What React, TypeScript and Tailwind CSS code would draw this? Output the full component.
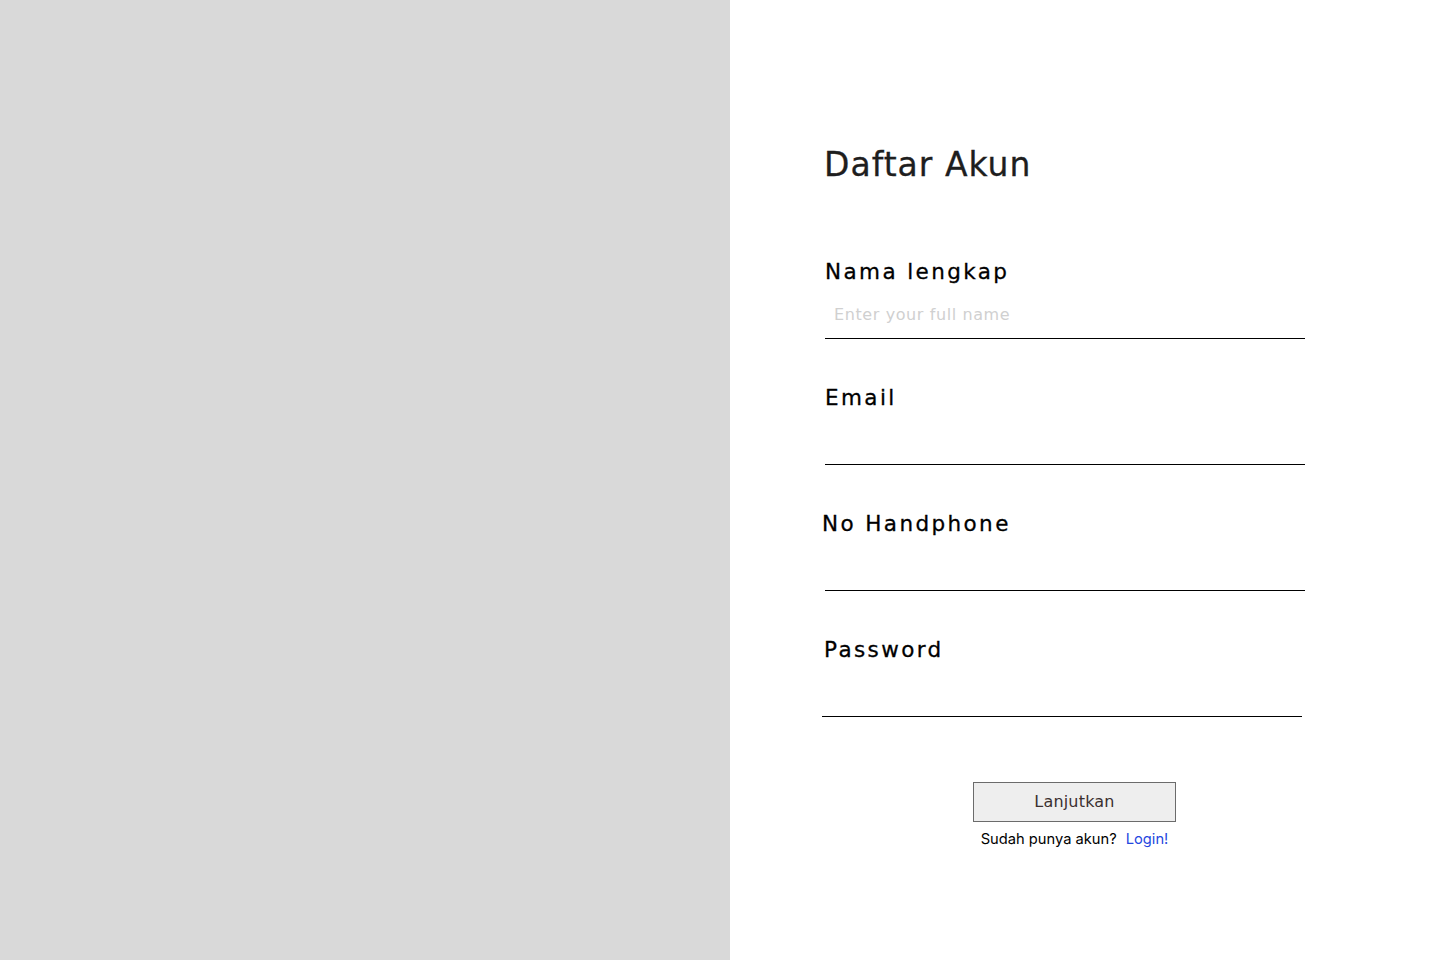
import React from "react";

const head = { fontFamily: '"DejaVu Sans", "Liberation Sans", sans-serif' };

function Field({ label, placeholder, shift = 0, labelShift = 0, type = "text" }: { label: string; placeholder?: string; shift?: number; labelShift?: number; type?: string }) {
  return (
    <div className="flex flex-col" style={shift ? { marginLeft: shift } : undefined}>
      <label
        className="block h-[30px] text-[21.5px] leading-[30px] tracking-[2.4px] text-black [-webkit-text-stroke:0.3px_black]"
        style={{ ...head, marginLeft: labelShift }}
      >
        {label}
      </label>
      <input
        type={type}
        placeholder={placeholder}
        className="h-[52px] w-[480px] border-b border-black bg-transparent pt-[4px] pl-[9px] text-[16px] tracking-[0.6px] text-black outline-none placeholder:text-[#d0d0d0]"
        style={head}
      />
    </div>
  );
}

export default function App() {
  return (
    <div className="flex h-[960px] w-[1440px] bg-white">
      <div className="h-full w-[730px] bg-[#d9d9d9]" />
      <div className="flex h-full flex-1 flex-col pl-[95px] pt-[145px]">
        <h1
          className="-ml-[1px] h-[40px] text-[33px] leading-[40px] tracking-[1px] text-[#1e1e1e] [-webkit-text-stroke:0.3px_#1e1e1e]"
          style={head}
        >
          Daftar Akun
        </h1>
        <div className="mt-[72px] flex flex-col gap-[44px]">
          <Field label="Nama lengkap" placeholder="Enter your full name" />
          <Field label="Email" />
          <Field label="No Handphone" labelShift={-3} />
          <Field label="Password" type="password" shift={-3} labelShift={2} />
        </div>
        <div className="mt-[65px] flex w-[480px] flex-col items-center pl-[19px]">
          <button
            className="h-[40px] w-[203px] border border-[#6b6b6b] bg-[#eeeeee] text-[16px] tracking-[0.2px] text-[#3b3030]"
            style={head}
          >
            Lanjutkan
          </button>
          <p
            className="mt-[7px] text-[14.7px] leading-[20px] text-black"
            style={{ fontFamily: 'Inter, "Liberation Sans", sans-serif' }}
          >
            Sudah punya akun?
            <a className="ml-[9px] text-[#2447e0]" href="#">
              Login!
            </a>
          </p>
        </div>
      </div>
    </div>
  );
}
